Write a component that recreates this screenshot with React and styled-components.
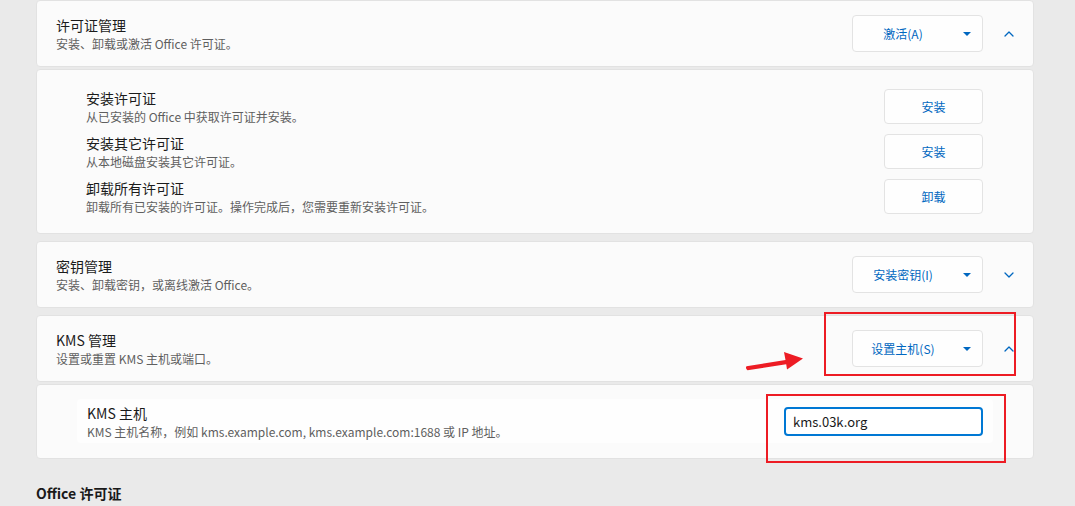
import React from "react";
import styled, { createGlobalStyle } from "styled-components";

const GlobalStyle = createGlobalStyle`
  html, body {
    margin: 0;
    padding: 0;
    background: #eaeaea;
  }
  body {
    font-family: "Noto Sans CJK SC", "Noto Sans", sans-serif;
    -webkit-font-smoothing: antialiased;
  }
  * { box-sizing: border-box; }
`;

const Page = styled.div`
  position: relative;
  width: 1075px;
  height: 506px;
  overflow: hidden;
  padding: 0 41px 0 36px;
`;

const Group = styled.section`
  display: flex;
  flex-direction: column;
  gap: 2px;
  & + & {
    margin-top: 7px;
  }
`;

const Card = styled.div`
  background: #fbfbfb;
  border: 1px solid #e2e2e2;
  border-radius: 4px;
`;

const Header = styled(Card)`
  height: 67px;
  display: flex;
  align-items: center;
  padding: 0 11px 0 19px;
`;

const TextBlock = styled.div`
  flex: 1;
  display: flex;
  flex-direction: column;
  min-width: 0;
`;

const Title = styled.div`
  font-size: 14px;
  line-height: 20px;
  color: #1b1b1b;
  white-space: nowrap;
`;

const Desc = styled.div`
  font-size: 12px;
  line-height: 17px;
  color: #5f5f5f;
  white-space: nowrap;
`;

const SplitButton = styled.button`
  width: 131px;
  height: 37px;
  display: flex;
  align-items: center;
  padding: 0 11px 0 0;
  background: #fefefe;
  border: 1px solid #e3e3e3;
  border-radius: 4px;
  font-family: inherit;
  font-size: 12px;
  color: #0067c0;
  cursor: pointer;
`;

const SplitLabel = styled.span`
  flex: 1;
  text-align: center;
  line-height: 17px;
`;

const CaretIcon = styled.svg`
  width: 8px;
  height: 4px;
  margin-left: 10px;
  display: block;
`;

const ExpandToggle = styled.span`
  width: 26px;
  height: 26px;
  margin-left: 13px;
  display: flex;
  align-items: center;
  justify-content: center;
`;

const ChevronIcon = styled.svg`
  width: 10px;
  height: 6px;
  display: block;
`;

const LicenseBody = styled(Card)`
  height: 165px;
  padding: 19px 50px 15px 49px;
  display: flex;
  flex-direction: column;
  gap: 10px;
`;

const ActionRow = styled.div`
  height: 35px;
  display: flex;
  align-items: center;
`;

const ActionButton = styled.button`
  width: 99px;
  height: 35px;
  background: #fefefe;
  border: 1px solid #e3e3e3;
  border-radius: 4px;
  font-family: inherit;
  font-size: 12px;
  color: #0067c0;
  cursor: pointer;
`;

const KmsBody = styled(Card)`
  height: 75px;
  padding: 14px 40px 15px 40px;
`;

const SettingRow = styled.div`
  height: 44px;
  background: #fefefe;
  border-radius: 4px;
  display: flex;
  align-items: center;
  padding: 0 10px;
`;

const HostInput = styled.input`
  width: 199px;
  height: 29px;
  border: 2px solid #0078d4;
  border-radius: 4px;
  padding: 0 7px;
  font-family: inherit;
  font-size: 13px;
  color: #1a1a1a;
  background: #fff;
  outline: none;
`;

const SectionHeading = styled.h2`
  margin: 24px 0 0;
  font-size: 14px;
  line-height: 20px;
  font-weight: 700;
  color: #1a1a1a;
`;

const Annotations = styled.svg`
  position: absolute;
  left: 0;
  top: 0;
  width: 1075px;
  height: 506px;
  pointer-events: none;
`;

const Caret = () => (
  <CaretIcon viewBox="0 0 8 4">
    <path d="M0 0 H8 L4 4 Z" fill="#0067c0" />
  </CaretIcon>
);

const Chevron = ({ up }) => (
  <ChevronIcon viewBox="0 0 10 6">
    <path
      d={up ? "M1 5 L5 1 L9 5" : "M1 1 L5 5 L9 1"}
      fill="none"
      stroke="#0067c0"
      strokeWidth="1.3"
      strokeLinecap="round"
      strokeLinejoin="round"
    />
  </ChevronIcon>
);

const SectionHeader = ({ title, desc, action, open }) => (
  <Header>
    <TextBlock>
      <Title>{title}</Title>
      <Desc>{desc}</Desc>
    </TextBlock>
    <SplitButton>
      <SplitLabel>{action}</SplitLabel>
      <Caret />
    </SplitButton>
    <ExpandToggle>
      <Chevron up={open} />
    </ExpandToggle>
  </Header>
);

const licenseActions = [
  { title: "安装许可证", desc: "从已安装的 Office 中获取许可证并安装。", button: "安装" },
  { title: "安装其它许可证", desc: "从本地磁盘安装其它许可证。", button: "安装" },
  {
    title: "卸载所有许可证",
    desc: "卸载所有已安装的许可证。操作完成后，您需要重新安装许可证。",
    button: "卸载",
  },
];

export default function App() {
  return (
    <>
      <GlobalStyle />
      <Page>
        <Group>
          <SectionHeader
            title="许可证管理"
            desc="安装、卸载或激活 Office 许可证。"
            action="激活(A)"
            open
          />
          <LicenseBody>
            {licenseActions.map((a) => (
              <ActionRow key={a.title}>
                <TextBlock>
                  <Title>{a.title}</Title>
                  <Desc>{a.desc}</Desc>
                </TextBlock>
                <ActionButton>{a.button}</ActionButton>
              </ActionRow>
            ))}
          </LicenseBody>
        </Group>

        <Group>
          <SectionHeader
            title="密钥管理"
            desc="安装、卸载密钥，或离线激活 Office。"
            action="安装密钥(I)"
          />
        </Group>

        <Group>
          <SectionHeader
            title="KMS 管理"
            desc="设置或重置 KMS 主机或端口。"
            action="设置主机(S)"
            open
          />
          <KmsBody>
            <SettingRow>
              <TextBlock>
                <Title>KMS 主机</Title>
                <Desc>KMS 主机名称，例如 kms.example.com, kms.example.com:1688 或 IP 地址。</Desc>
              </TextBlock>
              <HostInput defaultValue="kms.03k.org" />
            </SettingRow>
          </KmsBody>
        </Group>

        <SectionHeading>Office 许可证</SectionHeading>

        <Annotations viewBox="0 0 1075 506">
          <rect x="825" y="313" width="190" height="62" fill="none" stroke="#ed1c24" strokeWidth="2" />
          <rect x="767" y="395" width="238" height="67" fill="none" stroke="#ed1c24" strokeWidth="2" />
          <path
            d="M746.5 366.2 L785.5 360 L784 352 L803 358.6 L787 369.5 L786.2 364.3 L747.5 370.2 Q745 368.5 746.5 366.2 Z"
            fill="#ed1c24"
          />
        </Annotations>
      </Page>
    </>
  );
}
